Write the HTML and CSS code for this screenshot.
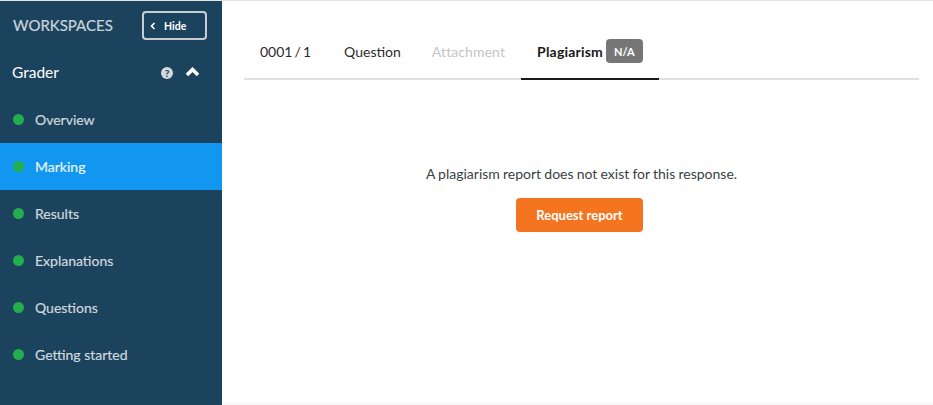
FILE: index.html
```html
<!DOCTYPE html>
<html lang="en">
<head>
  <meta charset="UTF-8" />
  <title>Grader - Marking</title>
  <link rel="stylesheet" href="styles.css">
</head>
<body>
  <aside class="sidebar">
    <div class="side-top">
      <span class="side-title">WORKSPACES</span>
      <button class="hide-btn">
        <svg width="6" height="8" viewBox="0 0 6 8"><path d="M4.5 1 L1.5 4 L4.5 7" fill="none" stroke="#fff" stroke-width="1.6"/></svg>
        <span>Hide</span>
      </button>
    </div>
    <div class="side-group">
      <span class="group-name">Grader</span>
      <span class="help-icon">?</span>
      <svg class="chevron" width="16" height="10" viewBox="0 0 16 10"><path d="M2 8 L7.5 2.5 L13 8" fill="none" stroke="#fff" stroke-width="3.6"/></svg>
    </div>
    <nav class="side-nav">
      <a href="#"><i class="dot"></i>Overview</a>
      <a href="#" class="active"><i class="dot"></i>Marking</a>
      <a href="#"><i class="dot"></i>Results</a>
      <a href="#"><i class="dot"></i>Explanations</a>
      <a href="#"><i class="dot"></i>Questions</a>
      <a href="#"><i class="dot"></i>Getting started</a>
    </nav>
  </aside>

  <main class="content">
    <div class="tabs">
      <a href="#" class="tab tab-count">0001 / 1</a>
      <a href="#" class="tab tab-question">Question</a>
      <a href="#" class="tab disabled">Attachment</a>
      <a href="#" class="tab active">Plagiarism<span class="badge">N/A</span></a>
    </div>
    <div class="empty">
      <p>A plagiarism report does not exist for this response.</p>
      <button class="request-btn">Request report</button>
    </div>
  </main>
</body>
</html>
```

FILE: styles.css
```css
body {
  font-family: 'Lato', sans-serif;
  margin: 0;
  display: flex;
  height: 405px;
  overflow: hidden;
  background-color: #fff;
  border-top: 1px solid #e6e6e6;
  box-sizing: border-box;
}
.sidebar {
  width: 222px;
  flex-shrink: 0;
  background-color: #1c435e;
  color: #fff;
}
.side-top {
  display: flex;
  align-items: center;
  justify-content: space-between;
  padding: 10px 15px 0 13px;
}
.side-title {
  font-size: 15px;
  line-height: 18px;
  margin-bottom: 1px;
  color: #c9d3da;
  -webkit-text-stroke: 0.2px;
}
.hide-btn {
  width: 65px;
  height: 29px;
  display: flex;
  align-items: center;
  padding: 0 0 0 6px;
  gap: 8px;
  background: transparent;
  border: 2px solid #c8cdd1;
  border-radius: 4px;
  color: #fff;
  font-family: inherit;
  font-size: 10.5px;
  font-weight: 700;
}
.side-group {
  display: flex;
  align-items: center;
  padding: 0 21px 0 12px;
  height: 47px;
  margin-top: 8px;
}
.group-name {
  font-size: 15.5px;
  flex: 1;
}
.help-icon {
  width: 12px;
  height: 12px;
  margin-top: 2px;
  border-radius: 50%;
  background: #d5dade;
  color: #1c435e;
  font-size: 10px;
  font-weight: 900;
  line-height: 12px;
  text-align: center;
  margin-right: 12px;
}
.chevron {
  margin-top: 1px;
}
.side-nav {
  margin-top: 1px;
}
.side-nav a {
  display: flex;
  align-items: center;
  height: 47px;
  padding-left: 13px;
  color: #d0d8dd;
  font-size: 14px;
  text-decoration: none;
  -webkit-text-stroke: 0.2px;
}
.side-nav a.active {
  background-color: #1297f0;
  color: #e8f4fc;
}
.dot {
  width: 11px;
  height: 11px;
  border-radius: 50%;
  background-color: #23ae4d;
  margin-right: 11px;
}
.content {
  flex: 1;
  padding: 0 14px 0 22px;
  background: linear-gradient(to top, #f7f7f7, #fff 5px);
}
.tabs {
  display: flex;
  padding-top: 24px;
  border-bottom: 2px solid #e0e0e0;
}
.tab {
  display: flex;
  align-items: center;
  height: 53px;
  padding: 0 16px;
  color: #2b2b2b;
  font-size: 14px;
  text-decoration: none;
}
.tab-count {
  word-spacing: -1.5px;
  padding-right: 17px;
}
.tab-question {
  padding-right: 15px;
}
.tab.disabled {
  color: #c4c4c4;
  letter-spacing: 0.1px;
}
.tab.active {
  margin-bottom: -2px;
  border-bottom: 2px solid #1a1a1a;
  font-weight: 700;
  letter-spacing: 0.2px;
  color: #1a1a1a;
}
.badge {
  background-color: #767676;
  color: #fff;
  font-size: 11px;
  font-weight: 700;
  letter-spacing: 0;
  border-radius: 4px;
  padding: 7px 8px 5px;
  margin: 0 0 2px 3px;
  line-height: 12px;
}
.empty {
  text-align: center;
  padding-top: 84px;
}
.empty p {
  margin: 0;
  font-size: 14px;
  line-height: 20px;
  word-spacing: -0.4px;
  color: #3a3f45;
}
.request-btn {
  margin: 14px 4px 0 0;
  width: 127px;
  height: 34px;
  background-color: #f4741f;
  color: #fff;
  border: none;
  border-radius: 4px;
  font-family: inherit;
  font-size: 13px;
  font-weight: 700;
}
```
